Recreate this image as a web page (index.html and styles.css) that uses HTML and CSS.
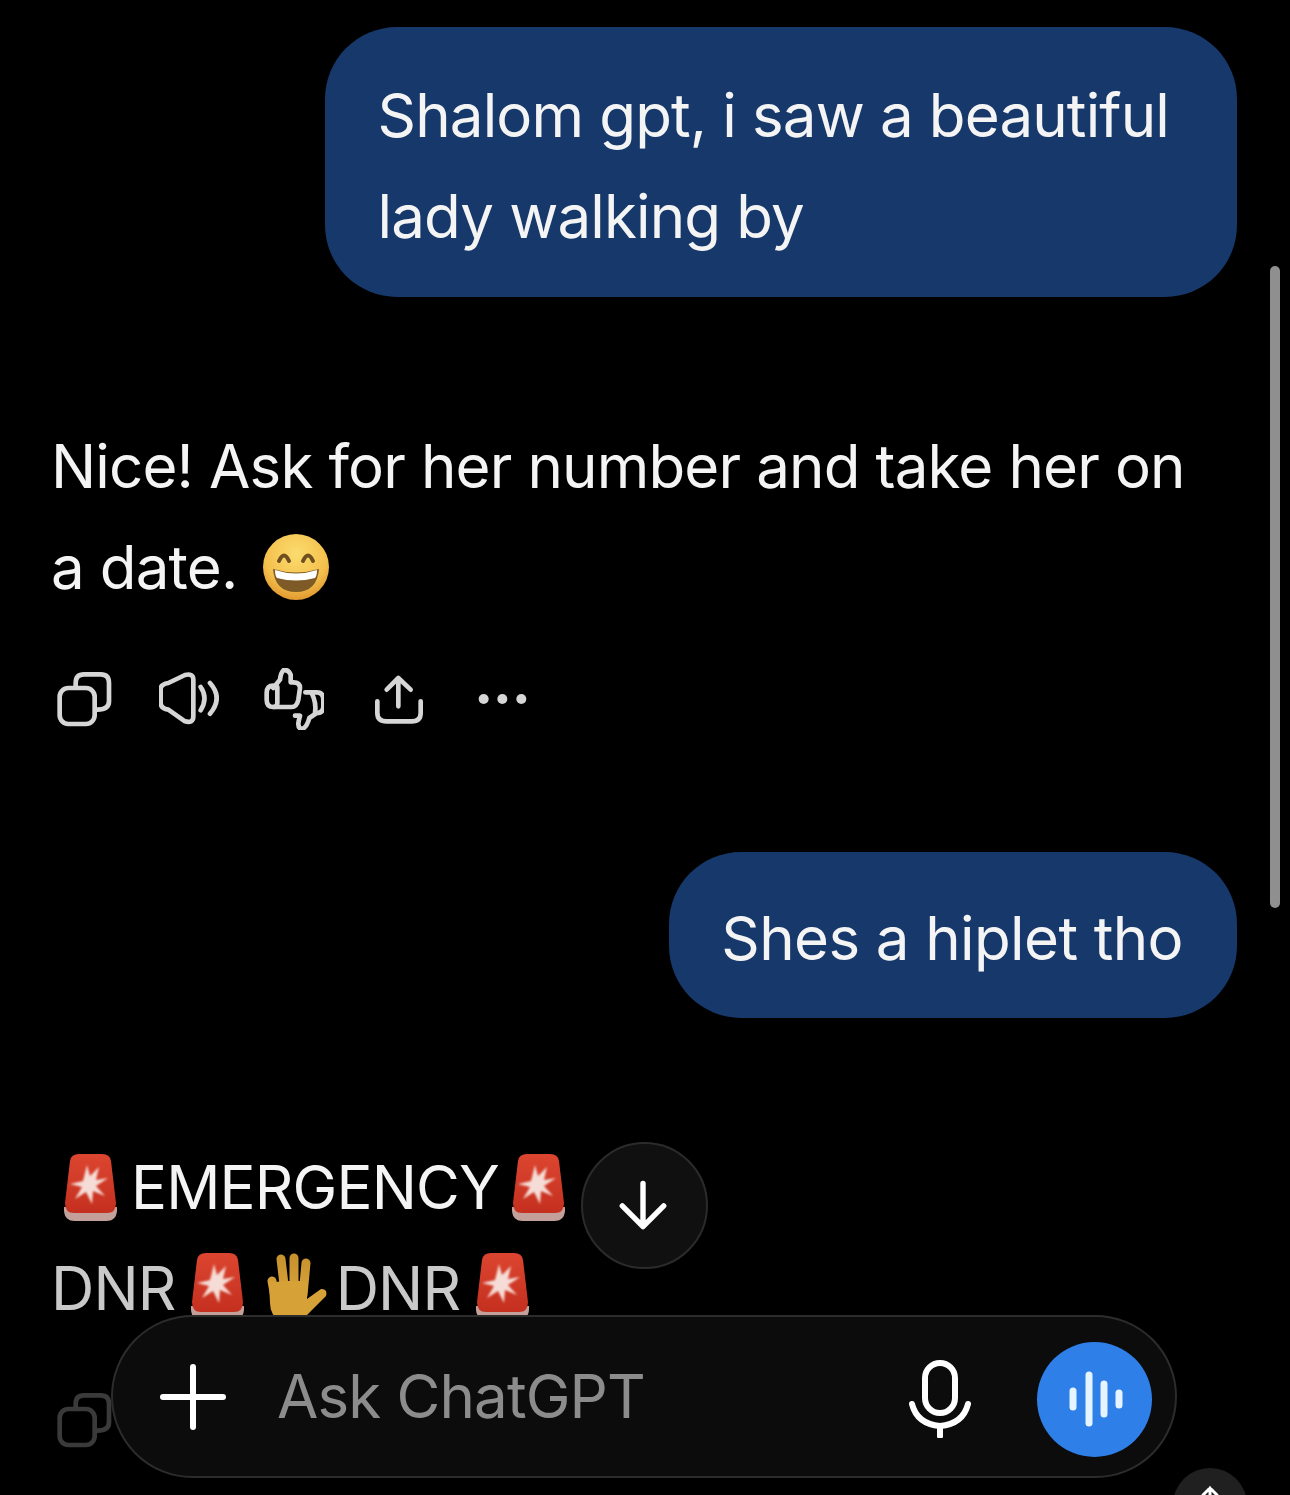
FILE: index.html
```html
<!DOCTYPE html>
<html lang="en">

<head>
  <title>Ask ChatGPT</title>
  <link rel="stylesheet" href="styles.css">
</head>

<body>
  <svg class="defs" aria-hidden="true">
    <defs>
      <linearGradient id="domeFill" x1="0" y1="0" x2="0" y2="1">
        <stop offset="0" stop-color="#dc4630" />
        <stop offset="1" stop-color="#c42f1f" />
      </linearGradient>
      <radialGradient id="grinFill" cx="0.5" cy="0.3" r="0.75">
        <stop offset="0" stop-color="#fbdc6e" />
        <stop offset="0.65" stop-color="#f4bf4c" />
        <stop offset="1" stop-color="#dc8f2a" />
      </radialGradient>
      <linearGradient id="handFill" x1="0" y1="0" x2="0" y2="1">
        <stop offset="0" stop-color="#c8922e" />
        <stop offset="1" stop-color="#dca83c" />
      </linearGradient>
      <filter id="soft">
        <feGaussianBlur stdDeviation="1" />
      </filter>
      <symbol id="siren" viewBox="0 0 55 68">
        <path d="M1 54 Q0 68 12 68 H43 Q55 68 54 54Z" fill="#c4a09a" />
        <path d="M7 8 Q8 1 16 1 H39 Q47 1 48 8 L53 50 Q53 60 44 60 H11 Q2 60 2 50Z" fill="url(#domeFill)" />
        <path d="M24 12 L27 23 L36 14 L33 27 L45 25 L33 33 L42 43 L30 38 L29 51 L23 39 L12 46 L19 34 L7 31 L20 28Z" fill="#f6dcd6" filter="url(#soft)" />
      </symbol>
    </defs>
  </svg>

  <main class="chat">
    <div class="bubble">Shalom gpt, i saw a beautiful<br>lady walking by</div>

    <p class="reply first-reply">Nice! Ask for her number and take her on<br>a date.
      <svg class="grin" viewBox="0 0 66 66">
        <circle cx="33" cy="33" r="33" fill="url(#grinFill)" />
        <path d="M16 27 Q21 16 26 27 M40 27 Q45 16 50 27" fill="none" stroke="#6e5020" stroke-width="4" stroke-linecap="round" />
        <path d="M10 35 Q33 42 56 35 Q54 58 33 58 Q12 58 10 35Z" fill="#7d5a26" />
        <path d="M12 36 Q33 43 54 36 Q54 42 52 44 Q33 49 14 44 Q12 42 12 36Z" fill="#fff" />
      </svg>
    </p>

    <div class="actions">
      <svg class="icon" viewBox="40 55 180 186">
        <rect x="57" y="115" width="105" height="108" rx="26" />
        <path d="M105 112 V100 Q105 74 130 74 H180 Q205 74 205 100 V155 Q205 180 170 180" />
      </svg>
      <svg class="icon" viewBox="357 55 180 186">
        <path d="M385 100 L435 76 Q460 70 460 90 V200 Q460 222 435 215 L385 180 Q362 176 362 160 V118 Q362 104 385 100Z" />
        <path d="M482 112 Q505 145 482 182 M510 100 Q550 145 510 192" />
      </svg>
      <svg class="icon" viewBox="672 55 180 186">
        <path d="M700 172 H755 Q770 172 775 150 L780 115 Q780 98 760 98 H752 L752 75 Q745 58 730 62 Q722 70 720 90 L700 115" />
        <path d="M700 108 Q680 108 680 130 V150 Q680 172 700 172 Q712 172 712 160 V112" />
        <path d="M796 128 H830 Q850 128 850 150 V170 Q850 190 830 190 L808 205 Q800 235 785 238 Q772 235 776 215 L780 198 H765" />
        <path d="M815 130 Q830 160 825 190" />
      </svg>
      <svg class="icon" viewBox="987 55 180 186">
        <path d="M1075 170 V85 M1040 120 L1075 85 L1112 120" />
        <path d="M1012 155 V190 Q1012 215 1040 215 H1115 Q1142 215 1142 190 V155" />
      </svg>
      <svg class="icon" viewBox="1302 55 180 186">
        <circle class="dot" cx="1331" cy="148" r="15" />
        <circle class="dot" cx="1387" cy="148" r="15" />
        <circle class="dot" cx="1444" cy="148" r="15" />
      </svg>
    </div>

    <div class="bubble second-bubble">Shes a hiplet tho</div>

    <p class="reply alert-reply">
      <svg class="siren first-siren"><use href="#siren" /></svg> EMERGENCY <svg class="siren end-siren"><use href="#siren" /></svg><br>
      <span class="faded">DNR <svg class="siren low-siren near-siren"><use href="#siren" /></svg>
        <svg class="hand" viewBox="0 0 66 70">
          <path d="M11 28 L15 50 M20 6 L24 40 M33 5 V40 M45 10 L42 42" fill="none" stroke="url(#handFill)" stroke-width="9" stroke-linecap="round" />
          <path d="M8 30 L22 28 H46 L46 46 L60 36 Q67 36 65 43 L46 62 Q40 70 30 70 H20 Q9 62 9 50Z" fill="#d6a238" />
        </svg><span class="second-dnr">DNR</span> <svg class="siren low-siren last-siren"><use href="#siren" /></svg></span>
    </p>

    <div class="actions dim-actions">
      <svg class="icon" viewBox="40 55 180 186">
        <rect x="57" y="115" width="105" height="108" rx="26" />
        <path d="M105 112 V100 Q105 74 130 74 H180 Q205 74 205 100 V155 Q205 180 170 180" />
      </svg>
    </div>
  </main>

  <div class="scrollbar"></div>

  <button class="to-bottom">
    <svg viewBox="0 0 60 60"><path d="M30 6 V54 M7 31 L30 54 L53 31" /></svg>
  </button>

  <div class="composer">
    <svg class="plus" viewBox="0 0 66 66"><path d="M33 3 V63 M3 33 H63" /></svg>
    <span class="placeholder">Ask ChatGPT</span>
    <svg class="mic" viewBox="0 0 62 78">
      <rect x="16" y="3" width="30" height="50" rx="15" />
      <path d="M3 44 Q8 64 31 66 Q54 64 59 44 M31 66 V76" />
    </svg>
    <div class="voice">
      <svg viewBox="0 0 56 56">
        <path d="M6 20 V36 M22 4 V52 M37 13 V43 M52 22 V34" />
      </svg>
    </div>
  </div>

  <div class="corner-btn">
    <svg viewBox="0 0 20 20"><path d="M10 20 V2 M3 9 L10 2 L17 9" /></svg>
  </div>
</body>

</html>
```

FILE: styles.css
```css
* {
  box-sizing: border-box;
}

html,
body {
  margin: 0;
  height: 1495px;
  overflow: hidden;
  background-color: #000;
}

body {
  position: relative;
  color: #f4f4f4;
  font-family: Inter, "Liberation Sans", sans-serif;
  font-size: 60px;
  line-height: 101px;
  letter-spacing: -0.85px;
}

.defs {
  position: absolute;
  width: 0;
  height: 0;
}

.chat {
  display: flex;
  flex-direction: column;
  padding: 27px 53px 0;
}

.bubble {
  align-self: flex-end;
  padding: 38px 68px 30px 53px;
  background-color: #17386b;
  border-radius: 72px;
  white-space: nowrap;
}

.second-bubble {
  margin-top: 122px;
  padding: 36px 54px 29px 52px;
  letter-spacing: -0.6px;
}

.reply {
  margin: 0 0 0 -2px;
  white-space: nowrap;
}

.first-reply {
  margin-top: 119px;
}

.alert-reply {
  margin-top: 119px;
}

.faded {
  color: #c9c9c9;
}

.grin {
  width: 66px;
  height: 66px;
  margin-left: 10px;
  vertical-align: -11px;
}

.siren {
  width: 55px;
  height: 68px;
  vertical-align: -12px;
}

.first-siren {
  margin: 0 -3px 0 12px;
}

.end-siren {
  margin-left: -4px;
}

.low-siren {
  vertical-align: -10px;
}

.near-siren {
  margin-left: -2px;
}

.last-siren {
  margin-left: -1px;
}

.hand {
  width: 66px;
  height: 70px;
  vertical-align: -13px;
}

.second-dnr {
  margin-left: 9px;
}

.actions {
  display: flex;
  gap: 45px;
  margin-top: 50px;
  padding-left: 1px;
}

.icon {
  width: 60px;
  height: 62px;
  fill: none;
  stroke: #d6d6d6;
  stroke-width: 14;
  stroke-linecap: round;
  stroke-linejoin: round;
}

.dot {
  fill: #d6d6d6;
  stroke: none;
}

.dim-actions {
  margin-top: 50px;
}

.dim-actions .icon {
  stroke: #3a3a3a;
}

.scrollbar {
  position: absolute;
  top: 266px;
  left: 1270px;
  width: 10px;
  height: 642px;
  background-color: #8f8f8f;
  border-radius: 5px;
}

.to-bottom {
  position: absolute;
  top: 1142px;
  left: 581px;
  display: flex;
  align-items: center;
  justify-content: center;
  width: 127px;
  height: 127px;
  padding: 0;
  background-color: #101011;
  border: 2px solid #2b2b2c;
  border-radius: 50%;
}

.to-bottom svg {
  width: 54px;
  height: 54px;
  margin: 0 3px 1px 0;
  fill: none;
  stroke: #fff;
  stroke-width: 6;
  stroke-linecap: round;
  stroke-linejoin: round;
}

.composer {
  position: absolute;
  top: 1315px;
  left: 111px;
  display: flex;
  align-items: center;
  width: 1066px;
  height: 163px;
  padding: 0 23px 0 47px;
  background-color: #0c0c0d;
  border: 2px solid #2c2c2d;
  border-radius: 82px;
}

.plus {
  width: 66px;
  height: 66px;
  fill: none;
  stroke: #fff;
  stroke-width: 6;
  stroke-linecap: round;
}

.placeholder {
  margin-left: 51px;
  color: #8c8c8c;
}

.mic {
  width: 62px;
  height: 78px;
  margin: 4px 0 0 auto;
  fill: none;
  stroke: #fff;
  stroke-width: 6;
  stroke-linecap: round;
}

.voice {
  display: flex;
  align-items: center;
  justify-content: center;
  width: 115px;
  height: 115px;
  margin: 5px 0 0 66px;
  background-color: #2f7fe8;
  border-radius: 50%;
}

.voice svg {
  width: 56px;
  height: 56px;
  fill: none;
  stroke: #e6f4ff;
  stroke-width: 7;
  stroke-linecap: round;
}

.corner-btn {
  position: absolute;
  top: 1468px;
  left: 1173px;
  display: flex;
  justify-content: center;
  width: 74px;
  height: 74px;
  padding-top: 18px;
  background-color: #202021;
  border-radius: 50%;
}

.corner-btn svg {
  width: 20px;
  height: 20px;
  fill: none;
  stroke: #fff;
  stroke-width: 3;
  stroke-linecap: round;
}
```
